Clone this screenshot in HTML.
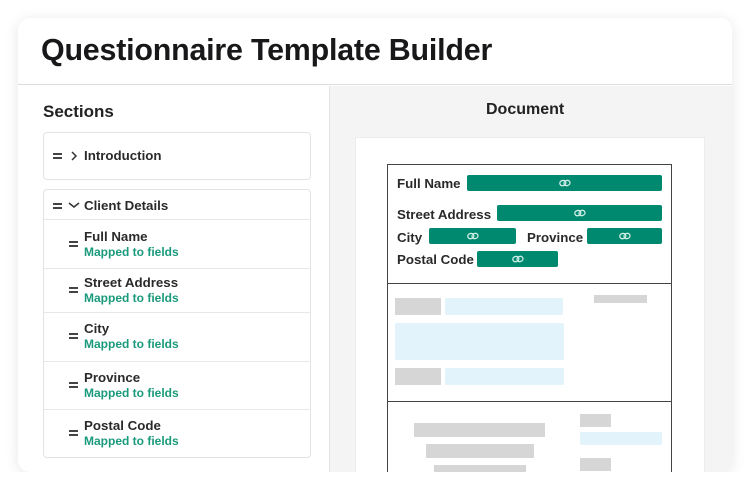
<!DOCTYPE html>
<html><head><meta charset="utf-8"><style>
*{box-sizing:border-box;margin:0;padding:0}
body{width:750px;height:491px;background:#fff;font-family:"Liberation Sans",sans-serif;position:relative;overflow:hidden;color:#1c1c1e}
.a{position:absolute}
.card{left:18px;top:18px;width:714px;height:454px;border-radius:12px;background:#fff;box-shadow:0 2px 14px rgba(0,0,0,.10);overflow:hidden}
.t{font-weight:bold}
.box{border:1px solid #e3e3e3;border-radius:4px;background:#fff}
.ham{width:9px;height:6px;border-top:2px solid #444;border-bottom:2px solid #444}
.lbl{font-size:13.3px;font-weight:bold;color:#2a2a2a}
.map{font-size:12px;font-weight:bold;color:#1a9a7c}
.g{background:#00896f;border-radius:2px}
.g svg{position:absolute;left:50%;top:50%;transform:translate(-50%,-50%)}
.gr{background:#d6d6d6}
.bl{background:#e3f3fc;border-radius:2px}
.dl{font-size:13.3px;font-weight:bold;color:#2a2a2a}
</style></head><body>
<div class="a card">
 <div class="a" style="left:0;top:0;width:714px;height:67px;border-bottom:1px solid #dcdcdc"></div>
 <div class="a t" style="left:23px;top:15px;font-size:30.4px;letter-spacing:-0.2px;color:#18181a">Questionnaire Template Builder</div>
 <div class="a" style="left:311px;top:68px;width:403px;height:386px;background:#f5f4f5;border-left:1px solid #e2e2e2"></div>
</div>
<div class="a t" style="left:43px;top:102px;font-size:17px;color:#222">Sections</div>
<div class="a box" style="left:43px;top:132px;width:268px;height:48px"></div>
<div class="a ham" style="left:53px;top:153px"></div>
<svg class="a" style="left:70px;top:151px" width="8" height="10"><path d="M2 1l4 4-4 4" stroke="#333" stroke-width="1.5" fill="none"/></svg>
<div class="a lbl" style="left:84px;top:148px">Introduction</div>
<div class="a box" style="left:43px;top:189px;width:268px;height:269px"></div>
<div class="a ham" style="left:53px;top:203px"></div>
<svg class="a" style="left:68px;top:201px" width="12" height="8"><path d="M1 2l5 4 5-4" stroke="#333" stroke-width="1.5" fill="none"/></svg>
<div class="a lbl" style="left:84px;top:198px">Client Details</div>
<div class="a" style="left:44px;top:219px;width:266px;border-top:1px solid #e8e8e8"></div>
<div class="a" style="left:44px;top:268px;width:266px;border-top:1px solid #e8e8e8"></div>
<div class="a" style="left:44px;top:312px;width:266px;border-top:1px solid #e8e8e8"></div>
<div class="a" style="left:44px;top:361px;width:266px;border-top:1px solid #e8e8e8"></div>
<div class="a" style="left:44px;top:409px;width:266px;border-top:1px solid #e8e8e8"></div>

<div class="a ham" style="left:69px;top:241px"></div><div class="a lbl" style="left:84px;top:229px">Full Name</div><div class="a map" style="left:84px;top:245px">Mapped to fields</div>
<div class="a ham" style="left:69px;top:287px"></div><div class="a lbl" style="left:84px;top:275px">Street Address</div><div class="a map" style="left:84px;top:291px">Mapped to fields</div>
<div class="a ham" style="left:69px;top:333px"></div><div class="a lbl" style="left:84px;top:321px">City</div><div class="a map" style="left:84px;top:337px">Mapped to fields</div>
<div class="a ham" style="left:69px;top:382px"></div><div class="a lbl" style="left:84px;top:370px">Province</div><div class="a map" style="left:84px;top:386px">Mapped to fields</div>
<div class="a ham" style="left:69px;top:430px"></div><div class="a lbl" style="left:84px;top:418px">Postal Code</div><div class="a map" style="left:84px;top:434px">Mapped to fields</div>

<div class="a t" style="left:486px;top:101px;font-size:16px;color:#222">Document</div>
<div class="a" style="left:355px;top:137px;width:350px;height:335px;background:#fff;border:1px solid #ececec;border-bottom:none"></div>
<div class="a" style="left:387px;top:164px;width:285px;height:310px;border:1px solid #444;border-bottom:none"></div>
<div class="a" style="left:387px;top:283px;width:285px;border-top:1px solid #444"></div>
<div class="a" style="left:387px;top:401px;width:285px;border-top:1px solid #444"></div>

<div class="a dl" style="left:397px;top:176px">Full Name</div>
<div class="a g" style="left:467px;top:175px;width:195px;height:16px"><svg width="12" height="8"><g stroke="#cfeee6" stroke-width="1.3" fill="none"><rect x="0.8" y="1.5" width="6" height="5" rx="2.5" transform="rotate(-20 4 4)"/><rect x="5" y="1.5" width="6" height="5" rx="2.5" transform="rotate(-20 8 4)"/></g></svg></div>
<div class="a dl" style="left:397px;top:207px">Street Address</div>
<div class="a g" style="left:497px;top:205px;width:165px;height:16px"><svg width="12" height="8"><g stroke="#cfeee6" stroke-width="1.3" fill="none"><rect x="0.8" y="1.5" width="6" height="5" rx="2.5" transform="rotate(-20 4 4)"/><rect x="5" y="1.5" width="6" height="5" rx="2.5" transform="rotate(-20 8 4)"/></g></svg></div>
<div class="a dl" style="left:397px;top:230px">City</div>
<div class="a g" style="left:429px;top:228px;width:87px;height:16px"><svg width="12" height="8"><g stroke="#cfeee6" stroke-width="1.3" fill="none"><rect x="0.8" y="1.5" width="6" height="5" rx="2.5" transform="rotate(-20 4 4)"/><rect x="5" y="1.5" width="6" height="5" rx="2.5" transform="rotate(-20 8 4)"/></g></svg></div>
<div class="a dl" style="left:527px;top:230px">Province</div>
<div class="a g" style="left:587px;top:228px;width:75px;height:16px"><svg width="12" height="8"><g stroke="#cfeee6" stroke-width="1.3" fill="none"><rect x="0.8" y="1.5" width="6" height="5" rx="2.5" transform="rotate(-20 4 4)"/><rect x="5" y="1.5" width="6" height="5" rx="2.5" transform="rotate(-20 8 4)"/></g></svg></div>
<div class="a dl" style="left:397px;top:252px">Postal Code</div>
<div class="a g" style="left:477px;top:251px;width:81px;height:16px"><svg width="12" height="8"><g stroke="#cfeee6" stroke-width="1.3" fill="none"><rect x="0.8" y="1.5" width="6" height="5" rx="2.5" transform="rotate(-20 4 4)"/><rect x="5" y="1.5" width="6" height="5" rx="2.5" transform="rotate(-20 8 4)"/></g></svg></div>

<div class="a gr" style="left:395px;top:298px;width:46px;height:17px"></div>
<div class="a bl" style="left:445px;top:298px;width:118px;height:17px"></div>
<div class="a gr" style="left:594px;top:295px;width:53px;height:8px"></div>
<div class="a bl" style="left:395px;top:323px;width:169px;height:37px"></div>
<div class="a gr" style="left:395px;top:368px;width:46px;height:17px"></div>
<div class="a bl" style="left:445px;top:368px;width:119px;height:17px"></div>

<div class="a gr" style="left:414px;top:423px;width:131px;height:14px"></div>
<div class="a gr" style="left:426px;top:444px;width:108px;height:14px"></div>
<div class="a gr" style="left:434px;top:465px;width:92px;height:7px"></div>
<div class="a gr" style="left:580px;top:414px;width:31px;height:13px"></div>
<div class="a bl" style="left:580px;top:432px;width:82px;height:13px"></div>
<div class="a gr" style="left:580px;top:458px;width:31px;height:13px"></div>
<div class="a" style="left:0;top:472px;width:750px;height:19px;background:#fff"></div>
</body></html>
